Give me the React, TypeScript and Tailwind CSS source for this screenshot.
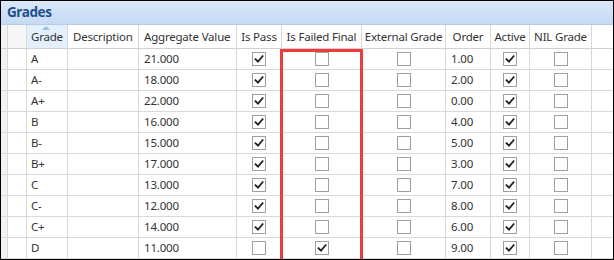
import React from "react";

const rows: [string, string, boolean, boolean, string, boolean][] = [
  ["A", "21.000", true, false, "1.00", true],
  ["A-", "18.000", true, false, "2.00", true],
  ["A+", "22.000", true, false, "0.00", true],
  ["B", "16.000", true, false, "4.00", true],
  ["B-", "15.000", true, false, "5.00", true],
  ["B+", "17.000", true, false, "3.00", true],
  ["C", "13.000", true, false, "7.00", true],
  ["C-", "12.000", true, false, "8.00", true],
  ["C+", "14.000", true, false, "6.00", true],
  ["D", "11.000", false, true, "9.00", true],
];

function Check({ on }: { on: boolean }) {
  return (
    <div className="w-[14px] h-[14px] border border-[#a0a0a0] bg-white flex items-center justify-center">
      {on && (
        <svg width="10" height="10" viewBox="0 0 10 10">
          <path d="M1.5 5.2 L4 7.6 L8.6 2.2" stroke="#222" strokeWidth="1.8" fill="none" strokeLinecap="square" />
        </svg>
      )}
    </div>
  );
}

const cell = "h-full border-r border-[#d9d9d9] flex items-center shrink-0 whitespace-nowrap overflow-hidden";

export default function App() {
  return (
    <div className="w-[614px] h-[260px] border border-black bg-white relative overflow-hidden" style={{ fontFamily: '"Noto Sans", "Open Sans", sans-serif' }}>
      <div className="h-[24px] bg-gradient-to-b from-[#dbe8f8] to-[#c6daf4] flex items-center pl-[6px] border-b border-[#b8cbe4]">
        <span className="text-[13.5px] font-bold text-[#1e4f8c] leading-none tracking-[-0.4px]">Grades</span>
      </div>
      <div className="h-[24px] flex text-[11.5px] tracking-[-0.2px] text-[#333] border-b border-[#d0d0d0]">
        <div className={`${cell} w-[7px] bg-[#f2f2f2]`} />
        <div className={`${cell} w-[19px] bg-[#f7f7f7]`} />
        <div className={`${cell} w-[41px] px-[4px] bg-[#e3f0fb] border-[#b9d6ee] relative`}>
          <svg className="absolute left-[15px] top-[1px]" width="8" height="4" viewBox="0 0 8 4"><path d="M0 4 L4 0 L8 4 Z" fill="#9bbfe0" /></svg>
          Grade
        </div>
        <div className={`${cell} w-[71px] px-[5px]`}>Description</div>
        <div className={`${cell} w-[98px] px-[5px]`}>Aggregate Value</div>
        <div className={`${cell} w-[45px] justify-center`}>Is Pass</div>
        <div className={`${cell} w-[80px] justify-center`}>Is Failed Final</div>
        <div className={`${cell} w-[84px] justify-center`}>External Grade</div>
        <div className={`${cell} w-[45px] justify-center`}>Order</div>
        <div className={`${cell} w-[39px] justify-center`}>Active</div>
        <div className={`${cell} w-[62px] justify-center`}>NIL Grade</div>
        <div className="flex-1" />
      </div>
      {rows.map(([g, agg, pass, failed, order, active]) => (
        <div key={g} className="h-[21px] flex text-[11.5px] tracking-[-0.2px] text-[#333] border-b border-[#d9d9d9]">
          <div className={`${cell} w-[7px] bg-[#f2f2f2]`} />
          <div className={`${cell} w-[19px] bg-white`} />
          <div className={`${cell} w-[41px] px-[4px]`}>{g}</div>
          <div className={`${cell} w-[71px]`} />
          <div className={`${cell} w-[98px] px-[5px]`}>{agg}</div>
          <div className={`${cell} w-[45px] justify-center`}><Check on={pass} /></div>
          <div className={`${cell} w-[80px] justify-center`}><Check on={failed} /></div>
          <div className={`${cell} w-[84px] justify-center`}><Check on={false} /></div>
          <div className={`${cell} w-[45px] px-[5px]`}>{order}</div>
          <div className={`${cell} w-[39px] justify-center`}><Check on={active} /></div>
          <div className={`${cell} w-[62px] justify-center`}><Check on={false} /></div>
          <div className="flex-1" />
        </div>
      ))}
      <div className="absolute left-[279px] top-[48px] w-[83px] h-[220px] border-[3px] border-[#ef3b3b]" />
    </div>
  );
}
